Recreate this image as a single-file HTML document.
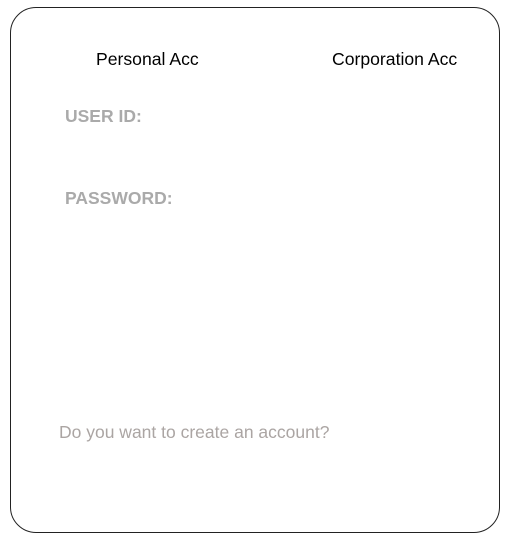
<!DOCTYPE html>
<html><head><style>
body{margin:0;width:508px;height:542px;background:#fff;font-family:"Liberation Sans",Arial,sans-serif;position:relative;overflow:hidden}
.box{position:absolute;left:10px;top:7px;width:488px;height:524px;border:1px solid #222;border-radius:26px}
.t{position:absolute;white-space:nowrap;line-height:1}
</style></head><body>
<div class="box"></div>
<div class="t" style="left:96px;top:51px;font-size:17.6px;color:#000">Personal Acc</div>
<div class="t" style="left:332px;top:51px;font-size:17.6px;color:#000">Corporation Acc</div>
<div class="t" style="left:65px;top:108px;font-size:17.5px;font-weight:bold;color:#aaa">USER ID:</div>
<div class="t" style="left:65px;top:190px;font-size:17.5px;font-weight:bold;color:#aaa">PASSWORD:</div>
<div class="t" style="left:59px;top:424px;font-size:17.5px;color:#aba5a3">Do you want to create an account?</div>
</body></html>
